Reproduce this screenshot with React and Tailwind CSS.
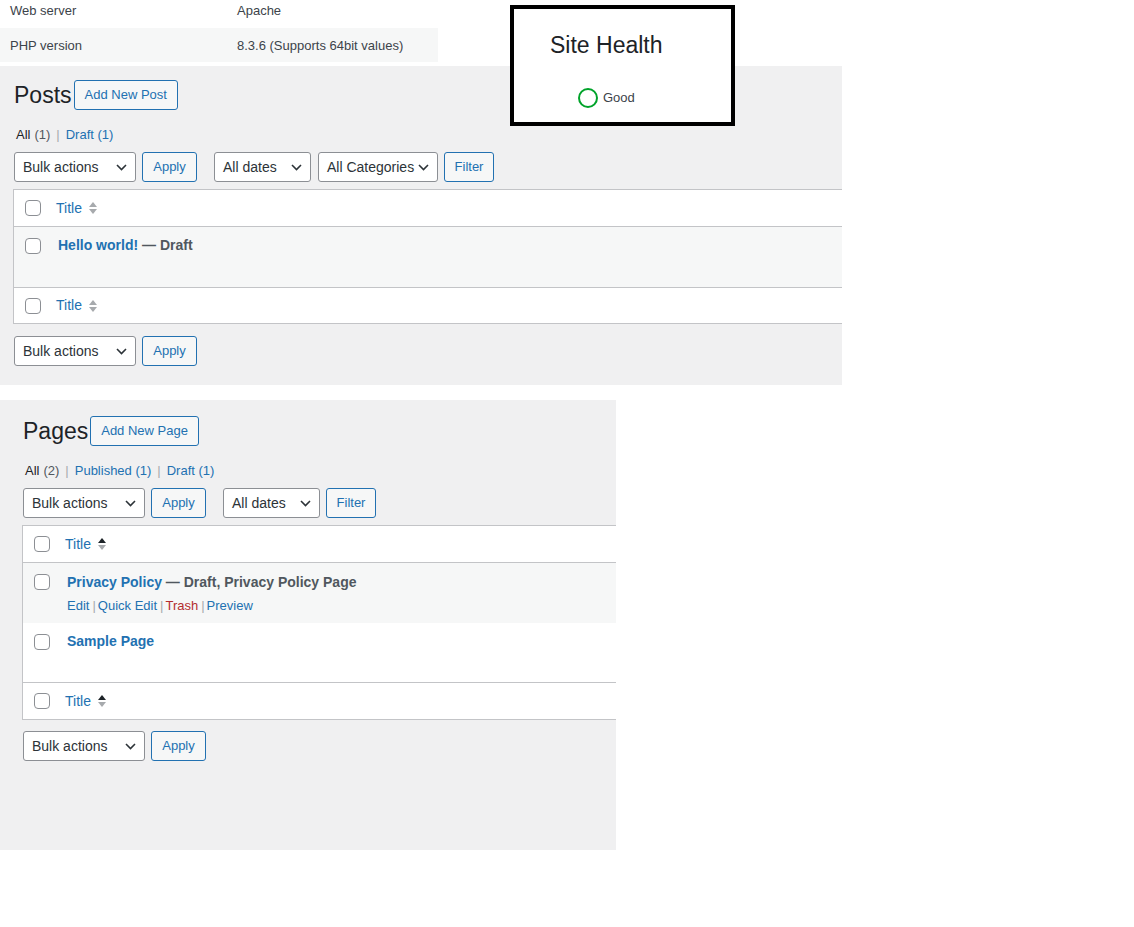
import React from "react";

const FONT = { fontFamily: '"Liberation Sans", Arial, sans-serif' };

function Chevron() {
  return (
    <svg width="11" height="7" viewBox="0 0 11 7" className="shrink-0">
      <polyline points="1,1 5.5,5.5 10,1" fill="none" stroke="#2c3338" strokeWidth="1.6" />
    </svg>
  );
}

function Select({ label, w }) {
  return (
    <div className={`flex items-center justify-between h-[30px] ${w} pl-[8px] pr-[8px] bg-white border border-[#8c8f94] rounded-[3px] text-[14px] text-[#2c3338]`}>
      <span>{label}</span>
      <Chevron />
    </div>
  );
}

function Btn({ label, w }) {
  return (
    <div className={`flex items-center justify-center h-[30px] ${w} border border-[#2271b1] rounded-[3px] bg-[#f6f7f7] text-[13px] text-[#2271b1]`}>
      {label}
    </div>
  );
}

function Check() {
  return <div className="w-[16px] h-[16px] bg-white border border-[#8c8f94] rounded-[4px] shrink-0" />;
}

function SortIcon({ active }) {
  return (
    <svg width="10" height="16" viewBox="0 0 10 16" className="ml-[6px]">
      <path d="M1 7 L5 2 L9 7 Z" fill={active ? "#1d2327" : "#a7aaad"} />
      <path d="M1 9 L9 9 L5 14 Z" fill="#a7aaad" />
    </svg>
  );
}

function HeadRow({ active, h, border }) {
  return (
    <div className={`flex items-center ${h} ${border}`}>
      <div className="w-[42px] pl-[11px] flex items-center">
        <Check />
      </div>
      <span className="text-[14px] text-[#2271b1]">Title</span>
      <SortIcon active={active} />
    </div>
  );
}

function Sep() {
  return <span className="mx-[6px] text-[#a7aaad]">|</span>;
}

function RowSep() {
  return <span className="text-[#a7aaad] ml-[3px] mr-[2px]">|</span>;
}

export default function App() {
  return (
    <div className="relative w-[1134px] h-[927px] bg-white overflow-hidden text-[#3c434a]" style={FONT}>
      {/* Top server info table */}
      <div className="w-[438px] text-[13px] text-[#3c434a]">
        <div className="flex h-[28px] pt-[1px] leading-[20px]">
          <div className="w-[237px] pl-[10px]">Web server</div>
          <div>Apache</div>
        </div>
        <div className="flex h-[34px] pt-[2px] items-center bg-[#f6f7f7]">
          <div className="w-[237px] pl-[10px]">PHP version</div>
          <div>8.3.6 (Supports 64bit values)</div>
        </div>
      </div>

      {/* Posts */}
      <div className="mt-[4px] w-[842px] h-[319px] bg-[#f0f0f1] overflow-hidden pl-[13px] pt-[14px]">
        <div className="flex items-center h-[30px] ml-[1px]">
          <h1 className="text-[23px] leading-[30px] text-[#1d2327]">Posts</h1>
          <div className="ml-[2px] flex items-center h-[30px] px-[10px] border border-[#2271b1] rounded-[3px] bg-[#f6f7f7] text-[13px] text-[#2271b1]">
            Add New Post
          </div>
        </div>
        <div className="mt-[15px] ml-[3px] h-[20px] leading-[20px] text-[13px] flex">
          <span className="text-[#1d2327]">All</span>
          <span className="ml-[4px] text-[#50575e]">(1)</span>
          <Sep />
          <span className="text-[#2271b1]">Draft (1)</span>
        </div>
        <div className="mt-[7px] ml-[1px] flex h-[30px]">
          <Select label="Bulk actions" w="w-[122px]" />
          <div className="ml-[6px]"><Btn label="Apply" w="w-[55px]" /></div>
          <div className="ml-[17px]"><Select label="All dates" w="w-[97px]" /></div>
          <div className="ml-[7px]"><Select label="All Categories" w="w-[120px]" /></div>
          <div className="ml-[6px]"><Btn label="Filter" w="w-[50px]" /></div>
        </div>
        <div className="mt-[7px] w-[900px] bg-white border border-[#c3c4c7]">
          <HeadRow h="h-[37px]" border="border-b border-[#c3c4c7]" />
          <div className="flex items-start h-[61px] bg-[#f6f7f7] border-b border-[#c3c4c7]">
            <div className="w-[44px] pl-[11px] pt-[11px]">
              <Check />
            </div>
            <div className="pt-[8px] text-[14px] leading-[20px] font-semibold">
              <span className="text-[#2271b1]">Hello world!</span>
              <span className="text-[#50575e]"> — Draft</span>
            </div>
          </div>
          <HeadRow h="h-[35px]" border="" />
        </div>
        <div className="mt-[12px] ml-[1px] flex h-[30px]">
          <Select label="Bulk actions" w="w-[122px]" />
          <div className="ml-[6px]"><Btn label="Apply" w="w-[55px]" /></div>
        </div>
      </div>

      {/* Pages */}
      <div className="mt-[15px] w-[616px] h-[450px] bg-[#f0f0f1] overflow-hidden pl-[22px] pt-[16px]">
        <div className="flex items-center h-[30px] ml-[1px]">
          <h1 className="text-[23px] leading-[30px] text-[#1d2327]">Pages</h1>
          <div className="ml-[2px] flex items-center h-[30px] px-[10px] border border-[#2271b1] rounded-[3px] bg-[#f6f7f7] text-[13px] text-[#2271b1]">
            Add New Page
          </div>
        </div>
        <div className="mt-[15px] ml-[3px] h-[20px] leading-[20px] text-[13px] flex">
          <span className="text-[#1d2327]">All</span>
          <span className="ml-[4px] text-[#50575e]">(2)</span>
          <Sep />
          <span className="text-[#2271b1]">Published (1)</span>
          <Sep />
          <span className="text-[#2271b1]">Draft (1)</span>
        </div>
        <div className="mt-[7px] ml-[1px] flex h-[30px]">
          <Select label="Bulk actions" w="w-[122px]" />
          <div className="ml-[6px]"><Btn label="Apply" w="w-[55px]" /></div>
          <div className="ml-[17px]"><Select label="All dates" w="w-[97px]" /></div>
          <div className="ml-[6px]"><Btn label="Filter" w="w-[50px]" /></div>
        </div>
        <div className="mt-[7px] w-[700px] bg-white border border-[#c3c4c7]">
          <HeadRow active h="h-[37px]" border="border-b border-[#c3c4c7]" />
          <div className="flex items-start h-[60px] bg-[#f6f7f7]">
            <div className="w-[44px] pl-[11px] pt-[11px]">
              <Check />
            </div>
            <div className="pt-[9px] text-[14px] leading-[20px]">
              <div className="font-semibold">
                <span className="text-[#2271b1]">Privacy Policy</span>
                <span className="text-[#50575e]"> — Draft, Privacy Policy Page</span>
              </div>
              <div className="mt-[4px] text-[13px] leading-[20px]">
                <span className="text-[#2271b1]">Edit</span>
                <RowSep />
                <span className="text-[#2271b1]">Quick Edit</span>
                <RowSep />
                <span className="text-[#b32d2e]">Trash</span>
                <RowSep />
                <span className="text-[#2271b1]">Preview</span>
              </div>
            </div>
          </div>
          <div className="flex items-start h-[60px] bg-white border-b border-[#c3c4c7]">
            <div className="w-[44px] pl-[11px] pt-[11px]">
              <Check />
            </div>
            <div className="pt-[8px] text-[14px] leading-[20px] font-semibold text-[#2271b1]">
              Sample Page
            </div>
          </div>
          <HeadRow active h="h-[36px]" border="" />
        </div>
        <div className="mt-[11px] ml-[1px] flex h-[30px]">
          <Select label="Bulk actions" w="w-[122px]" />
          <div className="ml-[6px]"><Btn label="Apply" w="w-[55px]" /></div>
        </div>
      </div>

      {/* Site Health overlay */}
      <div className="absolute left-[510px] top-[5px] w-[225px] h-[121px] bg-white border-4 border-black pl-[36px] pt-[21px]">
        <div className="text-[23px] leading-[30px] text-[#1d2327]">Site Health</div>
        <div className="mt-[28px] ml-[28px] flex items-center">
          <div className="w-[20px] h-[20px] rounded-full border-2 border-[#00a32a]" />
          <span className="ml-[5px] text-[13px] text-[#3c434a]">Good</span>
        </div>
      </div>
    </div>
  );
}
